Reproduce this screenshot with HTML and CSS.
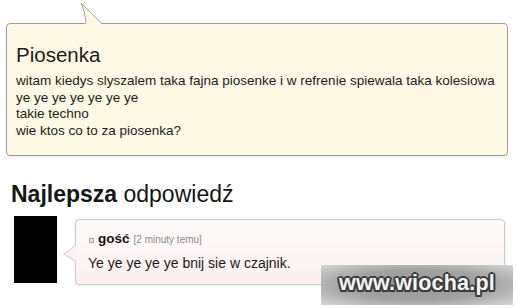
FILE: index.html
```html
<!DOCTYPE html>
<html lang="pl">

<head>
    <meta charset="UTF-8">
    <meta name="viewport" content="width=device-width, initial-scale=1.0">
    <title>Piosenka</title>
    <link rel="stylesheet" href="styles.css">
</head>

<body>
    <div class="page">
        <div class="question">
            <svg class="question-tail" width="30" height="24" viewBox="0 0 30 24">
                <path d="M8.5 24 Q8 10 4 2 Q14 12 25.5 24 Z" fill="#fdf9e4"/>
                <path d="M9 22.5 Q8 10 4 2 Q14 12 25 22.5" fill="none" stroke="#a3a28e" stroke-width="1"/>
            </svg>
            <h1 class="question-title">Piosenka</h1>
            <p class="question-text">
                witam kiedys slyszalem taka fajna piosenke i w refrenie spiewala taka kolesiowa<br>
                ye ye ye ye ye ye ye<br>
                takie techno<br>
                wie ktos co to za piosenka?
            </p>
        </div>

        <h2 class="best"><b>Najlepsza</b> odpowiedź</h2>

        <div class="answer">
            <div class="avatar"></div>
            <div class="answer-bubble">
                <svg class="answer-tail" width="16" height="22" viewBox="0 0 16 22">
                    <path d="M14 0 Q8 8 1.5 11 Q8 14 14 20 Z" fill="#fcf2f2"/>
                    <path d="M14 1 Q8 8 1.5 11 Q8 14 14 19" fill="none" stroke="#c9c9c9" stroke-width="1"/>
                </svg>
                <div class="answer-meta">
                    <span class="user-icon"></span>
                    <span class="user">gość</span>
                    <span class="time">[2 minuty temu]</span>
                </div>
                <p class="answer-text">Ye ye ye ye ye bnij sie w czajnik.</p>
            </div>
        </div>

        <div class="watermark">www.wiocha.pl</div>
    </div>
</body>

</html>
```

FILE: styles.css
```css
* {
    padding: 0;
    margin: 0;
    box-sizing: border-box;
}

body {
    background-color: #ffffff;
    color: #1a1a1a;
    font-family: "Liberation Sans", Arial, sans-serif;
}

.page {
    position: relative;
    width: 517px;
    height: 308px;
    padding: 23px 9px 0 6px;
    overflow: hidden;
}

/* question bubble */

.question {
    position: relative;
    height: 133px;
    padding: 19px 0 0 9px;
    background-color: #fdf9e4;
    border: 1px solid #9f9e8a;
    border-radius: 4px;
    box-shadow: 0 2px 3px rgba(0, 0, 0, 0.06);
}

.question-tail {
    position: absolute;
    left: 70px;
    top: -23px;
}

.question-title {
    font-size: 20.5px;
    font-weight: 400;
    line-height: 24px;
    color: #1c1c1c;
}

.question-text {
    margin-top: 6px;
    font-size: 13.5px;
    line-height: 16.5px;
    color: #1c1c1c;
}

/* best answer */

.best {
    margin: 24.5px 0 0 5px;
    font-size: 23px;
    font-weight: 400;
    line-height: 27px;
    color: #161616;
}

.answer {
    display: flex;
    align-items: flex-start;
    gap: 18px;
    margin: 8.5px 0 0 8px;
}

.avatar {
    width: 43px;
    height: 67px;
    background-color: #000;
    flex-shrink: 0;
}

.answer-bubble {
    position: relative;
    width: 430px;
    height: 66px;
    margin-top: 3px;
    padding: 10.5px 0 0 13px;
    background: linear-gradient(#fefbfb, #fcf0f0);
    border: 1px solid #cbcbcb;
    border-radius: 4px;
    box-shadow: 0 1px 3px rgba(0, 0, 0, 0.08);
}

.answer-tail {
    position: absolute;
    left: -14px;
    top: 23px;
}

.answer-meta {
    display: flex;
    align-items: baseline;
    gap: 4px;
    line-height: 16px;
}

.user-icon {
    width: 5px;
    height: 5px;
    border: 1px solid #a8a8a8;
    background-color: #e2e2e2;
    align-self: center;
    margin-top: 2px;
}

.user {
    font-size: 13.5px;
    font-weight: 700;
    color: #111;
}

.time {
    font-size: 10px;
    color: #8c8c8c;
}

.answer-text {
    margin: 7px 0 0 -1px;
    font-size: 14px;
    line-height: 17px;
    color: #1a1a1a;
}

/* watermark */

.watermark {
    position: absolute;
    left: 321px;
    top: 265px;
    width: 192px;
    height: 40px;
    display: flex;
    align-items: center;
    justify-content: center;
    padding-bottom: 4px;
    background: radial-gradient(ellipse at 50% 50%, #959595 0%, #a3a3a3 55%, #d6d6d6 100%);
    color: #f4f4f4;
    font-size: 21.5px;
    font-weight: 700;
    letter-spacing: 0.2px;
    text-shadow:
        2px 0 0 #3b3b3b, -2px 0 0 #3b3b3b, 0 2px 0 #3b3b3b, 0 -2px 0 #3b3b3b,
        1.5px 1.5px 0 #3b3b3b, -1.5px 1.5px 0 #3b3b3b, 1.5px -1.5px 0 #3b3b3b, -1.5px -1.5px 0 #3b3b3b;
}
```
